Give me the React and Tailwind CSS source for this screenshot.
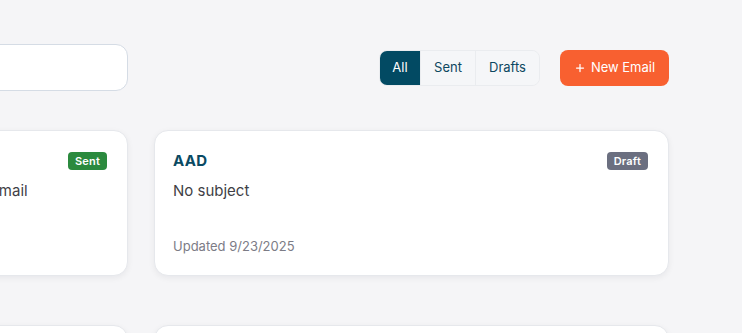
import { Plus } from 'lucide-react';

const emails = [
  { id: 1, to: 'Marketing Team', subject: 'Monthly product update and onboarding welcome email', status: 'Sent', updated: '9/22/2025' },
  { id: 2, to: 'AAD', subject: 'No subject', status: 'Draft', updated: '9/23/2025' },
  { id: 3, to: 'Support', subject: 'Re: Account access', status: 'Sent', updated: '9/20/2025' },
  { id: 4, to: 'HR', subject: 'Policy review', status: 'Draft', updated: '9/19/2025' },
];

function Badge({ status }) {
  const cls = status === 'Sent' ? 'bg-[#2b8a3e]' : 'bg-[#6b6f80]';
  return (
    <span className={`${cls} text-white text-[11px] font-semibold leading-none px-[7px] py-[3.5px] rounded-[4px] tracking-[0.2px]`}>
      {status}
    </span>
  );
}

function EmailCard({ email }) {
  return (
    <div className="bg-white rounded-[14px] border border-[#e6e8ec] shadow-[0_2px_6px_rgba(15,23,42,0.06)] h-[146px] pl-[18px] pr-5 pt-[19px] pb-[19px] flex flex-col">
      <div className="flex items-center justify-between">
        <h3 className="text-[15px] font-bold text-[#0a4a63] tracking-[0.3px]">{email.to}</h3>
        <Badge status={email.status} />
      </div>
      <p className="mt-[7px] text-[15px] text-[#3f3f46] whitespace-nowrap">{email.subject}</p>
      <p className="mt-auto text-[13px] text-[#7c7c86]">Updated {email.updated}</p>
    </div>
  );
}

export default function App() {
  return (
    <div className="min-h-screen bg-[#f5f5f7] overflow-hidden" style={{ fontFamily: '"Inter", "Open Sans", sans-serif' }}>
      <div className="w-[1056px] ml-[-387px] pt-[44px]">
        {/* Header */}
        <div className="flex items-center">
          <input
            className="w-[515px] h-[47px] bg-white border border-[#d5dce5] rounded-xl px-4 text-sm outline-none"
            placeholder=""
          />
          <div className="ml-auto flex items-center gap-5">
            <div className="flex h-[36px] rounded-lg border border-[#eaecef] overflow-hidden text-[13px]">
              <button className="w-[40px] bg-[#024a63] text-white">All</button>
              <button className="w-[55px] bg-[#f5f6f8] text-[#0d4760] border-l border-[#eaecef]">Sent</button>
              <button className="w-[64px] bg-[#f5f6f8] text-[#0d4760] border-l border-[#eaecef]">Drafts</button>
            </div>
            <button className="h-[36px] w-[109px] bg-[#f86030] rounded-lg text-white text-[13px] flex items-center justify-center gap-[5px]">
              <Plus className="w-3 h-3" strokeWidth={2.5} />
              New Email
            </button>
          </div>
        </div>

        {/* Cards */}
        <div className="grid grid-cols-2 gap-x-[26px] gap-y-[49px] mt-[39px]">
          {emails.map((e) => (
            <EmailCard key={e.id} email={e} />
          ))}
        </div>
      </div>
    </div>
  );
}
